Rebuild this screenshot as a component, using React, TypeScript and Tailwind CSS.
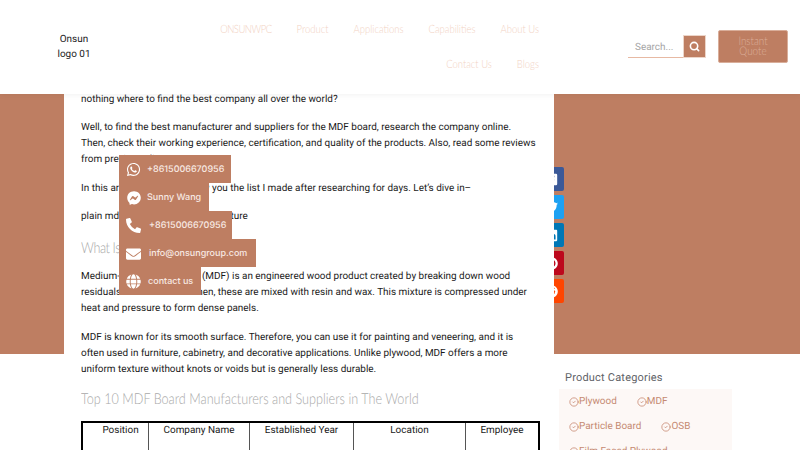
import React from 'react';
import { Search, CircleCheck } from 'lucide-react';
import {
  FaWhatsapp,
  FaFacebookMessenger,
  FaPhoneAlt,
  FaEnvelope,
  FaGlobe,
  FaFacebookSquare,
  FaTwitter,
  FaLinkedin,
  FaPinterest,
  FaReddit,
} from 'react-icons/fa';

const contacts = [
  { icon: FaWhatsapp, label: '+8615006670956', width: 'w-[112px]', gap: 'gap-[6px]', size: 15 },
  { icon: FaFacebookMessenger, label: 'Sunny Wang', width: 'w-[90px]', gap: 'gap-[6px]', size: 14 },
  { icon: FaPhoneAlt, label: '+8615006670956', width: 'w-[113px]', gap: 'gap-[8px]', size: 15 },
  { icon: FaEnvelope, label: 'info@onsungroup.com', width: 'w-[137px]', gap: 'gap-[8px]', size: 16 },
  { icon: FaGlobe, label: 'contact us', width: 'w-[82px]', gap: 'gap-[7px]', size: 15 },
];

const shares = [
  { icon: FaFacebookSquare, color: 'bg-[#3b5998]' },
  { icon: FaTwitter, color: 'bg-[#1da1f2]' },
  { icon: FaLinkedin, color: 'bg-[#0077b5]' },
  { icon: FaPinterest, color: 'bg-[#bd081c]' },
  { icon: FaReddit, color: 'bg-[#ff4500]' },
];

const columns = [
  { label: 'Position', width: 'w-[66px] pl-[10px]' },
  { label: 'Company Name', width: 'w-[101px]' },
  { label: 'Established Year', width: 'w-[104px]' },
  { label: 'Location', width: 'w-[112px]' },
  { label: 'Employee', width: 'flex-1' },
];

function NavLink({ children, tight }: { children: React.ReactNode; tight?: boolean }) {
  return (
    <a className={`inline-block scale-y-[1.2] text-[#f2d2c3] ${tight ? 'tracking-[-0.5px]' : ''}`}>{children}</a>
  );
}

function Category({ children }: { children: React.ReactNode }) {
  return (
    <span className="flex items-center">
      <CircleCheck className="h-[10px] w-[10px] text-[#c27f66]" strokeWidth={1.75} />
      {children}
    </span>
  );
}

function Heading({ children }: { children: React.ReactNode }) {
  return (
    <h2 className="h-[20px] origin-center scale-y-[1.2] font-['Lato',sans-serif] text-[12.65px] leading-[20px] font-light text-[#a8a8a8]">
      {children}
    </h2>
  );
}

export default function App() {
  return (
    <div className="relative h-[450px] w-[800px] overflow-hidden bg-white font-['Roboto',sans-serif] text-[9.95px] leading-[16px] text-[#1a1a1a] [text-rendering:geometricPrecision]">
      {/* header */}
      <header className="absolute top-0 left-0 z-30 flex h-[94px] w-full items-start bg-white shadow-[0_1px_6px_rgba(0,0,0,0.06)]">
        <div className="mt-[32px] ml-[54px] w-[40px] text-center leading-[15px] text-[#222]">
          Onsun logo 01
        </div>
        <nav className="mt-[13px] ml-[96px] flex w-[349px] flex-col items-end font-['Lato',sans-serif] text-[9.5px] font-light">
          <div className="flex h-[35px] items-center gap-[25px]">
            <NavLink tight>ONSUNWPC</NavLink>
            <NavLink>Product</NavLink>
            <NavLink>Applications</NavLink>
            <NavLink>Capabilities</NavLink>
            <NavLink>About Us</NavLink>
          </div>
          <div className="flex h-[35px] items-center gap-[25px]">
            <NavLink>Contact Us</NavLink>
            <NavLink>Blogs</NavLink>
          </div>
        </nav>
        <div className="mt-[35px] ml-[89px] flex h-[23px] w-[78px]">
          <div className="flex w-[55px] items-center border-b border-[#e7b9a3] pt-[3px] pl-[7px] text-[#a5a5a5]">Search...</div>
          <div className="flex w-[23px] items-center justify-center border border-[#ecd5c9] bg-[#be7e62]">
            <Search className="h-[11px] w-[11px] text-white" strokeWidth={3.5} />
          </div>
        </div>
        <div className="mt-[30px] ml-[12px] flex h-[33px] w-[70px] items-center justify-center rounded-[2px] border border-[#d9ae9a] bg-[#be7e62] pt-[1px] text-center font-['Lato',sans-serif] font-light text-[#dcae99]">
          <span className="inline-block scale-y-[1.2] leading-[9px]">Instant<br />Quote</span>
        </div>
      </header>

      {/* page body */}
      <main className="flex items-start">
        <div className="mt-[94px] h-[260px] w-[64px] bg-[#be7e62]" />
        <article className="relative z-10 h-[450px] w-[490px] bg-white pt-[91.5px] pr-[18px] pl-[17px]">
          <p className="mb-[12.5px]">nothing where to find the best company all over the world?</p>
          <p className="mb-[12.5px]">
            Well, to find the best manufacturer and suppliers for the MDF board, research the company online. Then, check their working experience, certification, and quality of the products. Also, read some reviews from previous clients.
          </p>
          <p className="mb-[12.5px]">In this article, I will now show you the list I made after researching for days. Let’s dive in–</p>
          <p className="mb-[12.5px]">plain mdf board for bedroom furniture</p>
          <Heading><span className="tracking-[-0.4px]">What Is MDF Board?</span></Heading>
          <p className="mt-[11.5px] mb-[12.5px]">
            Medium-density fiberboard (MDF) is an engineered wood product created by breaking down wood residuals into fine fibers. Then, these are mixed with resin and wax. This mixture is compressed under heat and pressure to form dense panels.
          </p>
          <p className="mb-[11px]">
            MDF is known for its smooth surface. Therefore, you can use it for painting and veneering, and it is often used in furniture, cabinetry, and decorative applications. Unlike plywood, MDF offers a more uniform texture without knots or voids but is generally less durable.
          </p>
          <Heading>Top 10 MDF Board Manufacturers and Suppliers in The World</Heading>
          <div className="mt-[12.5px] flex h-[60px] w-[459px] border-2 border-black">
            {columns.map((col) => (
              <div key={col.label} className={`${col.width} border-r border-[#555] text-center leading-[15px] last:border-r-0`}>
                {col.label}
              </div>
            ))}
          </div>
        </article>
        <aside className="flex-1">
          <div className="mt-[94px] h-[260px] w-full bg-[#be7e62]" />
          <div className="mt-[14px] ml-[5px] w-[173px] bg-white">
            <h3 className="h-[21px] pl-[6px] text-[11px] leading-[20px] tracking-[0.2px] text-[#5f6368]">Product Categories</h3>
            <div className="flex h-[80px] flex-wrap content-start gap-x-[20px] gap-y-[9px] bg-[#fdf8f6] px-[10px] pt-[5px] text-[#c58a72]">
              <Category>Plywood</Category>
              <Category>MDF</Category>
              <Category>Particle Board</Category>
              <Category>OSB</Category>
              <Category>Film Faced Plywood</Category>
            </div>
          </div>
        </aside>
      </main>

      {/* share bar, partly behind the article */}
      <div className="absolute top-[167px] left-[538px] flex flex-col gap-[4px]">
        {shares.map(({ icon: Icon, color }, i) => (
          <div key={i} className={`flex h-[24px] w-[26px] items-center justify-center rounded-[2px] text-white ${color}`}>
            <Icon size={13} />
          </div>
        ))}
      </div>

      {/* floating contact list */}
      <div className="absolute top-[155px] left-[119px] z-20 flex flex-col items-start font-['Inter',sans-serif] text-[9px] font-medium text-[#f8e9e2]">
        {contacts.map(({ icon: Icon, label, width, gap, size }, i) => (
          <div key={i} className={`flex h-[28px] items-center bg-[#be7e62] pt-[1px] pl-[7px] ${width} ${gap} whitespace-nowrap`}>
            <span className="flex w-[15px] justify-center text-white">
              <Icon size={size} />
            </span>
            {label}
          </div>
        ))}
      </div>
    </div>
  );
}
